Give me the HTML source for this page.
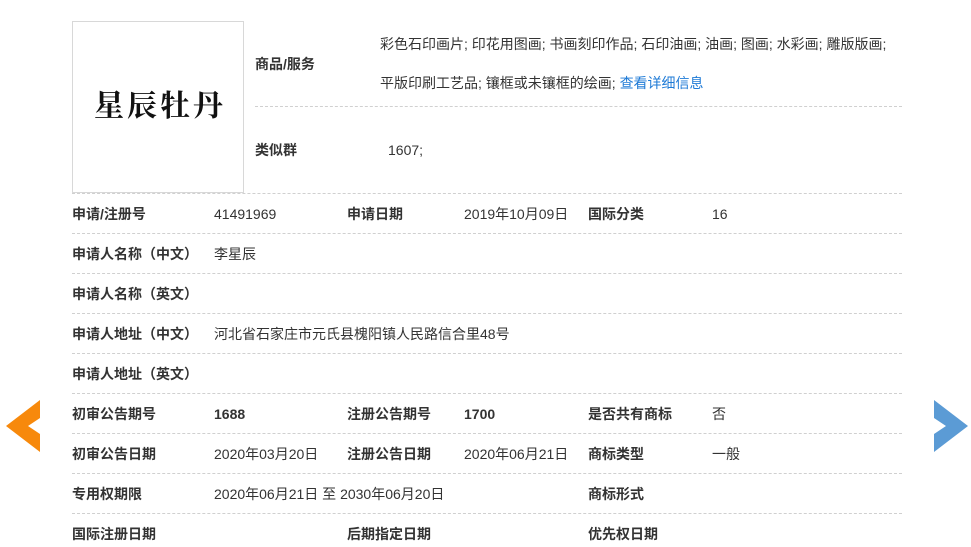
<!DOCTYPE html><html><head><meta charset="utf-8"><style>
body{margin:0;width:971px;height:547px;background:#fff;position:relative;overflow:hidden;font-family:"Liberation Sans","Noto Sans CJK SC",sans-serif;font-size:14px;color:#333}
.a{position:absolute;white-space:nowrap;line-height:16px}
b{font-weight:bold;color:#333}
.l{position:absolute;left:72px;width:830px;border-top:1px dashed #d0d0d0;height:0}
</style></head><body>
<div style="position:absolute;left:72px;top:21px;width:170px;height:170px;border:1px solid #d8d8d8"></div>
<div class="a" style="left:94px;top:86px;font-size:30px;line-height:34px;font-family:'Noto Serif CJK SC',serif;font-weight:bold;letter-spacing:3px;color:#111">星辰牡丹</div>
<div class="a" style="left:255px;top:56px"><b>商品/服务</b></div>
<div class="a" style="left:380px;top:36px">彩色石印画片; 印花用图画; 书画刻印作品; 石印油画; 油画; 图画; 水彩画; 雕版版画;</div>
<div class="a" style="left:380px;top:75px">平版印刷工艺品; 镶框或未镶框的绘画; <span style="color:#1e7ad6">查看详细信息</span></div>
<div style="position:absolute;left:255px;top:106px;width:647px;border-top:1px dashed #d0d0d0"></div>
<div class="a" style="left:255px;top:142px"><b>类似群</b></div>
<div class="a" style="left:388px;top:142px">1607;</div>
<div class="l" style="top:193px"></div><div class="l" style="top:233px"></div><div class="l" style="top:273px"></div><div class="l" style="top:313px"></div><div class="l" style="top:353px"></div><div class="l" style="top:393px"></div><div class="l" style="top:433px"></div><div class="l" style="top:473px"></div><div class="l" style="top:513px"></div>
<div class="a" style="left:72px;top:206px"><b>申请/注册号</b></div><div class="a" style="left:214px;top:206px">41491969</div>
<div class="a" style="left:347px;top:206px"><b>申请日期</b></div><div class="a" style="left:464px;top:206px">2019年10月09日</div>
<div class="a" style="left:588px;top:206px"><b>国际分类</b></div><div class="a" style="left:712px;top:206px">16</div>
<div class="a" style="left:72px;top:246px"><b>申请人名称（中文）</b></div><div class="a" style="left:214px;top:246px">李星辰</div>
<div class="a" style="left:72px;top:286px"><b>申请人名称（英文）</b></div>
<div class="a" style="left:72px;top:326px"><b>申请人地址（中文）</b></div><div class="a" style="left:214px;top:326px">河北省石家庄市元氏县槐阳镇人民路信合里48号</div>
<div class="a" style="left:72px;top:366px"><b>申请人地址（英文）</b></div>
<div class="a" style="left:72px;top:406px"><b>初审公告期号</b></div><div class="a" style="left:214px;top:406px"><b>1688</b></div>
<div class="a" style="left:347px;top:406px"><b>注册公告期号</b></div><div class="a" style="left:464px;top:406px"><b>1700</b></div>
<div class="a" style="left:588px;top:406px"><b>是否共有商标</b></div><div class="a" style="left:712px;top:406px">否</div>
<div class="a" style="left:72px;top:446px"><b>初审公告日期</b></div><div class="a" style="left:214px;top:446px">2020年03月20日</div>
<div class="a" style="left:347px;top:446px"><b>注册公告日期</b></div><div class="a" style="left:464px;top:446px">2020年06月21日</div>
<div class="a" style="left:588px;top:446px"><b>商标类型</b></div><div class="a" style="left:712px;top:446px">一般</div>
<div class="a" style="left:72px;top:486px"><b>专用权期限</b></div><div class="a" style="left:214px;top:486px">2020年06月21日 至 2030年06月20日</div>
<div class="a" style="left:588px;top:486px"><b>商标形式</b></div>
<div class="a" style="left:72px;top:526px"><b>国际注册日期</b></div>
<div class="a" style="left:347px;top:526px"><b>后期指定日期</b></div>
<div class="a" style="left:588px;top:526px"><b>优先权日期</b></div>
<svg style="position:absolute;left:6px;top:400px" width="34" height="52"><polygon points="34,0 34,18 22,26 34,34 34,52 0,26" fill="#f7890c"/></svg>
<svg style="position:absolute;left:934px;top:400px" width="34" height="52"><polygon points="0,0 0,18 12,26 0,34 0,52 34,26" fill="#5b9bd5"/></svg>
</body></html>
